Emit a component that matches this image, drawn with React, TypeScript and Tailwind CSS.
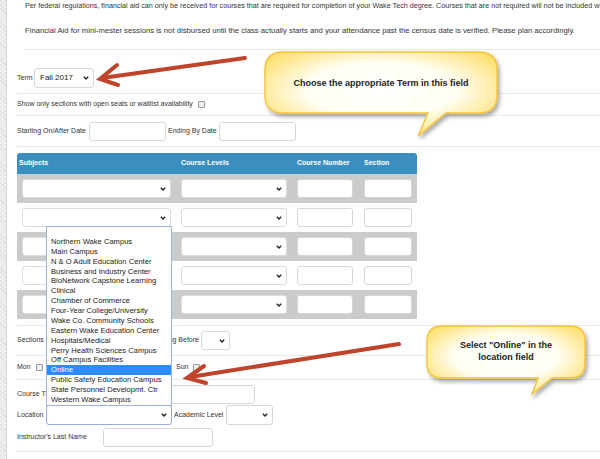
const LOCATIONS = [
  "",
  "Northern Wake Campus",
  "Main Campus",
  "N & O Adult Education Center",
  "Business and Industry Center",
  "BioNetwork Capstone Learning",
  "Clinical",
  "Chamber of Commerce",
  "Four-Year College/University",
  "Wake Co. Community Schools",
  "Eastern Wake Education Center",
  "Hospitals/Medical",
  "Perry Health Sciences Campus",
  "Off Campus Facilities",
  "Online",
  "Public Safety Education Campus",
  "State Personnel Developmt. Ctr",
  "Western Wake Campus",
];

function Chevron() {
  return (
    <svg width="6" height="4" viewBox="0 0 6 4" className="shrink-0">
      <polyline points="0.8,0.8 3,3 5.2,0.8" fill="none" stroke="#222" strokeWidth="1.4" />
    </svg>
  );
}

function Select({ className, children }: { className: string; children?: React.ReactNode }) {
  return (
    <div className={["flex items-center justify-between rounded-[3px] border bg-white pl-[4px] pr-[4px]", className].join(" ")}>
      <span className="text-[8px] text-[#222]">{children}</span>
      <Chevron />
    </div>
  );
}

function Input({ className }: { className: string }) {
  return <div className={["rounded-[3px] border border-[#d6d6d6] bg-white", className].join(" ")} />;
}

function Checkbox() {
  return <div className="h-[7px] w-[7px] shrink-0 rounded-[1px] border border-[#9a9a9a] bg-[#efefef]" />;
}

function Rule() {
  return <div className="h-px bg-[#e8e8e8]" />;
}

export default function App() {
  return (
    <div className="relative flex h-[459px] w-[600px] overflow-hidden bg-white font-['Liberation_Sans',Arial,sans-serif] text-[#333]">
      <div className="w-[7px] shrink-0 border-r border-[#d6d6d6] bg-[repeating-linear-gradient(45deg,#dedede_0px,#dedede_1px,#f0f0f0_1px,#f0f0f0_3px)]" />

      <div className="flex min-w-0 flex-1 flex-col pl-[10px]">
        {/* notes */}
        <div className="overflow-hidden pl-[7px]">
          <p className="mt-[1px] whitespace-nowrap pl-px text-[7.2px] leading-[10px]">
            Per federal regulations, financial aid can only be received for courses that are required for completion of your Wake Tech degree. Courses that are not required will not be included when
          </p>
          <p className="mt-[15px] whitespace-nowrap pl-px text-[7.7px] leading-[10px]">
            Financial Aid for mini-mester sessions is not disbursed until the class actually starts and your attendance past the census date is verified. Please plan accordingly.
          </p>
          <div className="mt-[13px]">
            <Rule />
          </div>
        </div>

        {/* term */}
        <div className="flex items-center pb-[5px] pt-[18px]">
          <span className="w-[17px] whitespace-nowrap text-[7px]">Term</span>
          <Select className="h-[20px] w-[60px] border-[#d6d6d6] pl-[5px]">Fall 2017</Select>
        </div>
        <Rule />

        <div className="flex h-[21px] items-center gap-[5px] text-[7px]">
          <span>Show only sections with open seats or waitlist availability</span>
          <Checkbox />
        </div>
        <Rule />

        <div className="flex items-center pb-[5px] pt-[6px] text-[7px]">
          <span className="w-[72px] whitespace-nowrap">Starting On/After Date</span>
          <Input className="h-[19px] w-[77px]" />
          <span className="ml-[2px] w-[51px] whitespace-nowrap">Ending By Date</span>
          <Input className="h-[19px] w-[77px]" />
        </div>
        <Rule />

        {/* course table */}
        <div className="mt-[6px] w-[400px]">
          <div className="grid h-[21px] grid-cols-[164px_116px_67px_53px] items-center rounded-t-[3px] bg-[#3b8fc0] text-[7px] font-bold text-white">
            <span className="pl-[2px]">Subjects</span>
            <span>Course Levels</span>
            <span>Course Number</span>
            <span>Section</span>
          </div>
          {[0, 1, 2, 3, 4].map((row) => (
            <div
              key={row}
              className={[
                "grid h-[29px] grid-cols-[164px_116px_67px_53px] items-center",
                row % 2 === 0 ? "bg-[#cbcbcb]" : "bg-white",
              ].join(" ")}
            >
              <div className="pl-[5px]">
                <Select className="h-[19px] w-[149px] border-[#dcdcdc]" />
              </div>
              <Select className="h-[19px] w-[106px] border-[#dcdcdc]" />
              <Input className="h-[19px] w-[56px]" />
              <Input className="h-[19px] w-[48px]" />
            </div>
          ))}
        </div>
        <div className="mt-[6px]">
          <Rule />
        </div>

        {/* meeting times (middle part sits under the open list) */}
        <div className="flex items-center pb-[5px] pt-[5px] text-[7px]">
          <div className="flex w-[182px] items-center justify-between">
            <span>Sections</span>
            <span className="whitespace-nowrap">Ending Before</span>
          </div>
          <Select className="ml-[2px] h-[19px] w-[29px] border-[#d6d6d6]" />
        </div>
        <Rule />

        <div className="flex h-[23px] items-center text-[7px]">
          <div className="flex w-[159px] items-center gap-[5px]">
            <span>Mon</span>
            <Checkbox />
          </div>
          <div className="flex items-center gap-[5px]">
            <span>Sun</span>
            <Checkbox />
          </div>
        </div>
        <Rule />

        <div className="flex items-center pt-[5px] text-[7px]">
          <span className="w-[72px] whitespace-nowrap">Course Title</span>
          <Input className="h-[19px] w-[166px]" />
        </div>
        <div className="mt-[1px] flex items-center text-[7px]">
          <span className="w-[29px]">Location</span>
          <Select className="h-[20px] w-[126px] border-[#8fb0e0]" />
          <span className="ml-[2px] w-[52px] whitespace-nowrap">Academic Level</span>
          <Select className="h-[20px] w-[47px] border-[#d6d6d6]" />
        </div>
        <div className="mt-[3px] flex items-center text-[7px]">
          <span className="w-[86px] whitespace-nowrap">Instructor's Last Name</span>
          <Input className="h-[19px] w-[110px]" />
        </div>
        <div className="mt-[4px]">
          <Rule />
        </div>
      </div>

      {/* open location list */}
      <div className="absolute left-[46px] top-[226px] w-[126px] border border-[#9ab4da] bg-white">
        {LOCATIONS.map((loc, i) => (
          <div
            key={i}
            className={[
              "h-[9.875px] whitespace-nowrap pl-[4px] text-[7.6px] leading-[9.875px]",
              loc === "Online" ? "bg-[#2a8cff] text-white" : "text-[#222]",
            ].join(" ")}
          >
            {loc}
          </div>
        ))}
      </div>

      {/* annotations */}
      <svg className="pointer-events-none absolute left-0 top-0" width="600" height="459" viewBox="0 0 600 459">
        <defs>
          <radialGradient id="bubble" cx="50%" cy="45%" r="65%">
            <stop offset="0%" stopColor="#ffffff" />
            <stop offset="50%" stopColor="#fffef2" />
            <stop offset="100%" stopColor="#ffdb5c" />
          </radialGradient>
          <filter id="shadow" x="-10%" y="-10%" width="130%" height="140%">
            <feDropShadow dx="2" dy="3" stdDeviation="2" floodColor="#000" floodOpacity="0.35" />
          </filter>
        </defs>

        <path
          d="M283,52 H479 Q497,52 497,70 V95 Q497,113 479,113 H446 L418,136 L428,113 H283 Q265,113 265,95 V70 Q265,52 283,52 Z"
          fill="url(#bubble)"
          stroke="#f3c43a"
          strokeWidth="1.4"
          filter="url(#shadow)"
        />
        <path
          d="M442,326 H570 Q585,326 585,341 V363 Q585,378 570,378 H552 L532,394 L538,378 H442 Q427,378 427,363 V341 Q427,326 442,326 Z"
          fill="url(#bubble)"
          stroke="#f3c43a"
          strokeWidth="1.4"
          filter="url(#shadow)"
        />

        <g stroke="#c0432b" strokeWidth="4" fill="none" strokeLinecap="round" strokeLinejoin="miter">
          <line x1="245" y1="58" x2="102" y2="78" />
          <polyline points="117,65 100,79 118,85" />
          <line x1="399" y1="344" x2="190" y2="377" />
          <polyline points="204,366 187,378 206,383" />
        </g>
      </svg>

      <div className="absolute left-[265px] top-[77px] w-[232px] text-center text-[9px] font-bold leading-[12px] text-[#222]">
        Choose the appropriate Term in this field
      </div>
      <div className="absolute left-[427px] top-[340px] w-[158px] text-center text-[9px] font-bold leading-[11.5px] text-[#222]">
        Select "Online" in the
        <br />
        location field
      </div>
    </div>
  );
}
